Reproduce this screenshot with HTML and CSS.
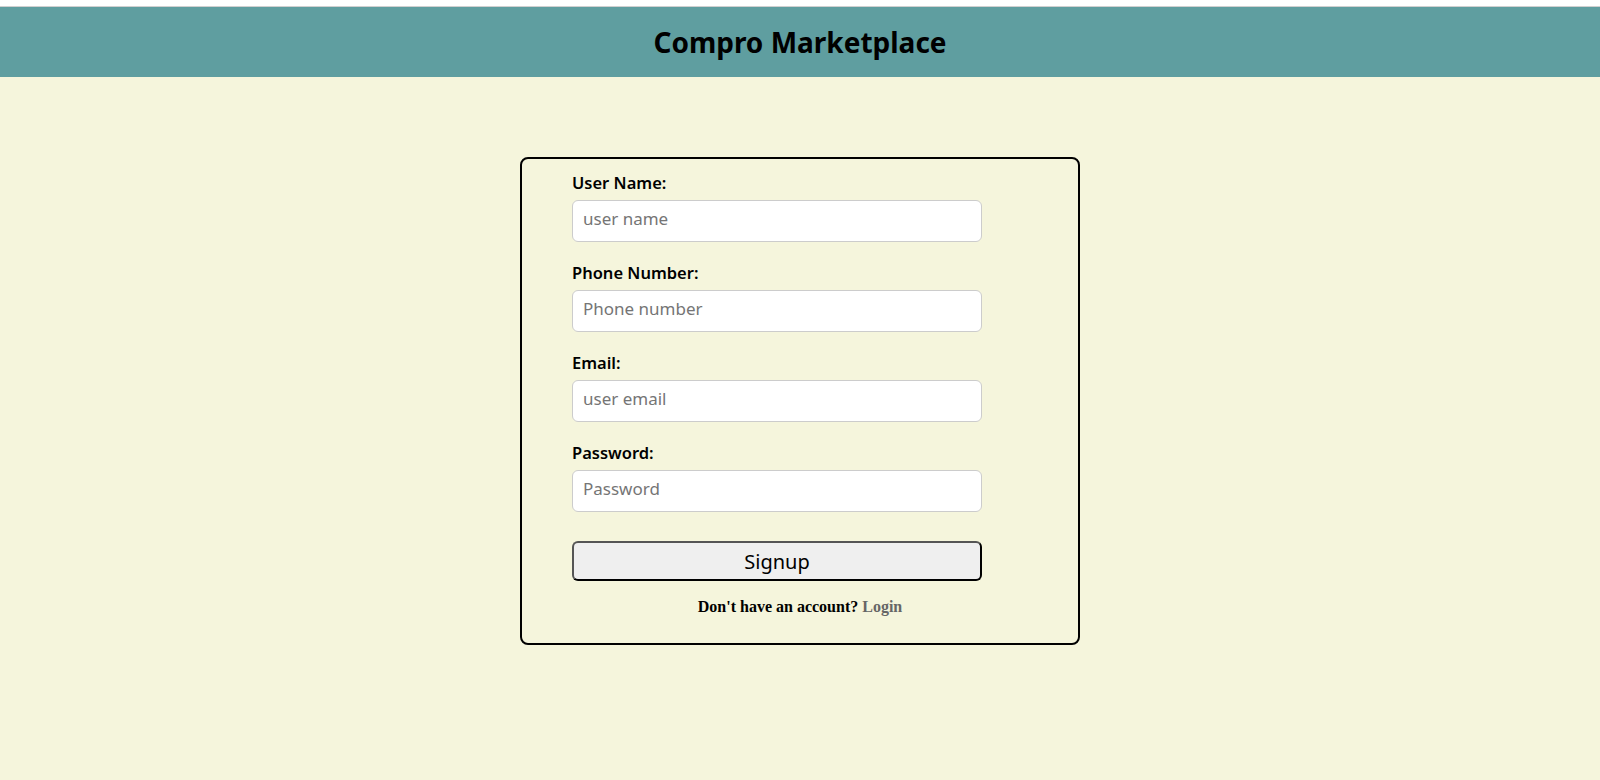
FILE: index.html
```html
<!DOCTYPE html>
<html lang="en">
<head>
<meta charset="utf-8">
<title>Compro Marketplace</title>
<link rel="stylesheet" href="styles.css">
</head>
<body>
<div class="topstrip"></div>
<header class="header">
  <h1 class="title">Compro Marketplace</h1>
</header>
<main class="main">
  <form class="card">
    <div class="group">
      <label class="label" for="u">User Name:</label>
      <input class="input" id="u" type="text" placeholder="user name">
    </div>
    <div class="group">
      <label class="label" for="p">Phone Number:</label>
      <input class="input" id="p" type="text" placeholder="Phone number">
    </div>
    <div class="group">
      <label class="label" for="e">Email:</label>
      <input class="input" id="e" type="text" placeholder="user email">
    </div>
    <div class="group">
      <label class="label" for="pw">Password:</label>
      <input class="input" id="pw" type="password" placeholder="Password">
    </div>
    <button class="btn" type="button">Signup</button>
    <p class="note">Don't have an account? <a class="link" href="#">Login</a></p>
  </form>
</main>
</body>
</html>
```
FILE: styles.css
```css
html, body {
  margin: 0;
  padding: 0;
}
body {
  background: #f5f5dc;
  font-family: "Noto Sans", "Open Sans", sans-serif;
  min-height: 780px;
}
.topstrip {
  height: 6px;
  background: #ffffff;
  border-bottom: 1px solid #d0d0d0;
}
.header {
  background: #5f9ea0;
  height: 70px;
  display: flex;
  align-items: center;
  justify-content: center;
}
.title {
  margin: 0;
  font-size: 28px;
  font-weight: 700;
  color: #000;
}
.main {
  padding-top: 80px;
  display: flex;
  justify-content: center;
}
.card {
  width: 556px;
  box-sizing: content-box;
  border: 2px solid #000;
  border-radius: 8px;
  padding: 13px 0 27px 0;
  display: flex;
  flex-direction: column;
}
.group {
  display: flex;
  flex-direction: column;
  margin-left: 50px;
  width: 410px;
  margin-bottom: 20px;
}
.label {
  display: block;
  font-size: 16.5px;
  line-height: 22px;
  font-weight: 600;
  color: #000;
  margin-bottom: 6px;
}
.input {
  box-sizing: border-box;
  height: 42px;
  width: 410px;
  border: 1px solid #cccccc;
  border-radius: 6px;
  background: #fff;
  padding: 0 10px 5px 10px;
  font-family: "Noto Sans", "Open Sans", sans-serif;
  font-size: 17px;
  color: #000;
  outline: none;
}
.input::placeholder {
  color: #757575;
}
.btn {
  margin: 9px 0 0 50px;
  box-sizing: border-box;
  width: 410px;
  height: 40px;
  border: 2px solid #000;
  border-top-color: #555;
  border-left-color: #555;
  border-radius: 6px;
  background: #efefef;
  font-family: "Noto Sans", "Open Sans", sans-serif;
  font-size: 20px;
  color: #000;
  padding: 0;
}
.note {
  margin: 17px 0 0 0;
  text-align: center;
  font-family: "Liberation Serif", serif;
  font-weight: 700;
  font-size: 16px;
  line-height: 18px;
  color: #000;
}
.link {
  color: #666666;
  text-decoration: none;
}
```
